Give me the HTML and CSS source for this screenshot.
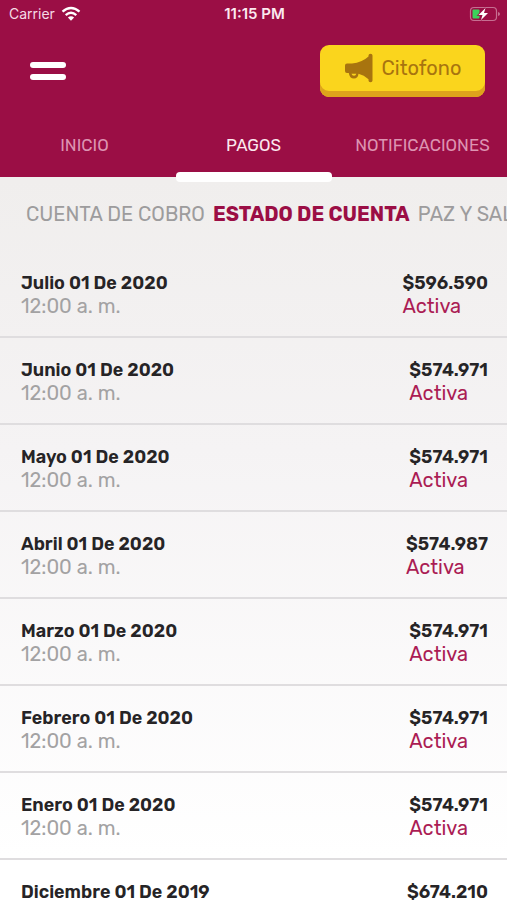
FILE: index.html
```html
<!DOCTYPE html>
<html lang="es">
<head>
<meta charset="utf-8">
<meta name="viewport" content="width=device-width, initial-scale=1">
<title>Estado de cuenta</title>
<link rel="stylesheet" href="styles.css">
</head>
<body>
<header class="header">
  <div class="status">
    <span class="carrier">Carrier
      <svg width="20" height="16" viewBox="0 0 20 16" aria-hidden="true"><g fill="none" stroke="#fff" stroke-width="2.3"><path d="M1.5 5.7Q10 -1.7 18.500 5.700"/><path d="M4.700 9.200Q10 4.300 15.300 9.200"/></g><path d="M10 14.800 6.900 11.500Q10 8.800 13.100 11.500Z" fill="#fff"/></svg>
    </span>
    <time class="clock">11:15 PM</time>
    <svg class="battery" width="31" height="16" viewBox="0 0 31 16" aria-hidden="true"><rect x="1.500" y="1.500" width="26" height="13" rx="3.500" fill="none" stroke="#c66f91" stroke-width="1.200"/><path d="M29 6v4q2-.5 2-2t-2-2z" fill="#c66f91"/><rect x="3.500" y="3.500" width="7" height="9" rx="1" fill="#3bd45b"/><path d="M16.500 2 9.500 9h4l-1.500 5 7-7h-4z" fill="#fff" stroke="#9b0e45" stroke-width="1.600" paint-order="stroke"/></svg>
  </div>
  <div class="toolbar">
    <button class="menu" type="button" aria-label="Menú"><span></span><span></span></button>
    <button class="intercom" type="button">
      <svg width="30" height="30" viewBox="0 0 30 30" aria-hidden="true"><path d="M1 12.500Q1 10.500 3 10.500H8Q18 9.500 24.500 3.500V2.500Q24.500.8 26.500.8T28.500 2.500V27.500Q28.500 29.200 26.500 29.200T24.500 27.500V26.200Q20 22 14.500 20.800Q14 25.500 10 25.500Q5.500 25.500 4.800 20H3Q1 20 1 18Z" fill="#a8740f"/><path d="M7.500 20.700H12.300Q11.800 22.700 10 22.700Q8 22.700 7.500 20.700Z" fill="#fad51d"/></svg>
      Citofono
    </button>
  </div>
  <nav class="tabs" aria-label="Secciones">
    <a href="#inicio">INICIO</a>
    <a href="#pagos" class="current" aria-current="page">PAGOS</a>
    <a href="#notificaciones">NOTIFICACIONES</a>
  </nav>
</header>
<main>
  <nav class="subtabs" aria-label="Pagos">
    <a href="#cobro">CUENTA DE COBRO</a>
    <a href="#estado" class="selected" aria-current="true">ESTADO DE CUENTA</a>
    <a href="#paz">PAZ Y SALVO</a>
  </nav>
  <ul class="list">
    <li><div><h2>Julio 01 De 2020</h2><p>12:00 a. m.</p></div><div><strong>$596.590</strong><p class="state">Activa</p></div></li>
    <li><div><h2>Junio 01 De 2020</h2><p>12:00 a. m.</p></div><div><strong>$574.971</strong><p class="state">Activa</p></div></li>
    <li><div><h2>Mayo 01 De 2020</h2><p>12:00 a. m.</p></div><div><strong>$574.971</strong><p class="state">Activa</p></div></li>
    <li><div><h2>Abril 01 De 2020</h2><p>12:00 a. m.</p></div><div><strong>$574.987</strong><p class="state">Activa</p></div></li>
    <li><div><h2>Marzo 01 De 2020</h2><p>12:00 a. m.</p></div><div><strong>$574.971</strong><p class="state">Activa</p></div></li>
    <li><div><h2>Febrero 01 De 2020</h2><p>12:00 a. m.</p></div><div><strong>$574.971</strong><p class="state">Activa</p></div></li>
    <li><div><h2>Enero 01 De 2020</h2><p>12:00 a. m.</p></div><div><strong>$574.971</strong><p class="state">Activa</p></div></li>
    <li><div><h2>Diciembre 01 De 2019</h2></div><div><strong>$674.210</strong></div></li>
  </ul>
</main>
</body>
</html>
```
FILE: styles.css
```css
* { box-sizing: border-box; }
html { height: 100%; }
body {
  margin: 0;
  min-height: 100%;
  font-family: Rubik, Roboto, sans-serif;
  background: linear-gradient(#f0eeed 20%, #f5f3f4 50%, #ffffff 95%);
}
body::-webkit-scrollbar { display: none; }
h2, p, ul { margin: 0; padding: 0; }
a { text-decoration: none; }
button { border: 0; padding: 0; cursor: pointer; font-family: inherit; }

.header { background: #9b0e45; color: #fff; }
.status {
  display: grid;
  grid-template-columns: 1fr auto 1fr;
  align-items: center;
  height: 27px;
  padding: 0 7px 0 9px;
  font: 14px/27px Inter, sans-serif;
}
.carrier { display: flex; align-items: center; gap: 6px; color: #f5dbe5; }
.clock { font-size: 15px; font-weight: 600; color: #fbe8ef; }
.battery { justify-self: end; }

.toolbar {
  display: flex;
  justify-content: space-between;
  align-items: center;
  height: 87px;
  padding: 0 22px 0 30px;
}
.menu { display: grid; gap: 6px; background: none; }
.menu span { width: 36px; height: 6px; border-radius: 3px; background: #fff; }
.intercom {
  display: flex;
  align-items: center;
  justify-content: center;
  gap: 8px;
  width: 165px;
  height: 52px;
  padding-bottom: 6px;
  border-radius: 9px;
  background: #fad51d;
  box-shadow: inset 0 -6px #dea31c;
  color: #a8740f;
  font-size: 20px;
}

.tabs { display: grid; grid-template-columns: repeat(3, 1fr); height: 63px; }
.tabs a {
  position: relative;
  text-align: center;
  font-size: 17px;
  line-height: 63px;
  color: #dd94b2;
}
.tabs .current { color: #fbe8ef; }
.current::after {
  content: "";
  position: absolute;
  left: 7px;
  right: 6px;
  bottom: -5px;
  height: 10px;
  border-radius: 4px;
  background: #fff;
}

.subtabs {
  display: flex;
  gap: 8px;
  height: 74px;
  padding-left: 26px;
  overflow: hidden;
  white-space: nowrap;
  font-size: 20px;
  line-height: 75px;
}
.subtabs a { color: #9d9c9d; }
.subtabs .selected { color: #9b0e45; font-weight: 700; }

.list { list-style: none; }
.list li {
  display: flex;
  justify-content: space-between;
  height: 87px;
  padding: 21px 19px 0 21px;
  border-bottom: 2px solid #dfdddf;
  line-height: 23px;
}
.list h2, .list strong { display: block; font-size: 18px; font-weight: 600; color: #262426; }
.list p { font-size: 20px; color: #a3a2a3; }
.list .state { color: #ab1c54; }
```
